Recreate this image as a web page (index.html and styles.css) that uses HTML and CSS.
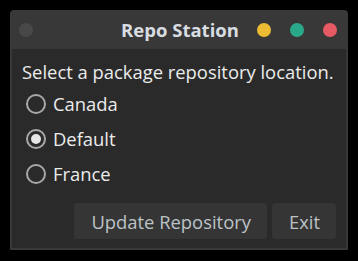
FILE: index.html
```html
<!DOCTYPE html>
<html lang="en">
<head>
  <meta charset="UTF-8" />
  <meta name="viewport" content="width=device-width, initial-scale=1.0"/>
  <title>Repo Station</title>
  <link rel="stylesheet" href="styles.css">
</head>
<body>
  <div class="window">
    <div class="titlebar">
      <span class="dot dot-grey"></span>
      <span class="title">Repo Station</span>
      <div class="controls">
        <span class="dot dot-yellow"></span>
        <span class="dot dot-green"></span>
        <span class="dot dot-red"></span>
      </div>
    </div>

    <div class="content">
      <p class="prompt">Select a package repository location.</p>

      <label class="option"><input type="radio" name="repo" value="canada" /><span class="radio"></span> Canada</label>
      <label class="option"><input type="radio" name="repo" value="default" checked /><span class="radio"></span> Default</label>
      <label class="option"><input type="radio" name="repo" value="france" /><span class="radio"></span> France</label>

      <div class="actions">
        <button class="btn">Update Repository</button>
        <button class="btn">Exit</button>
      </div>
    </div>
  </div>
</body>
</html>
```

FILE: styles.css
```css
body {
  margin: 0;
  padding: 10px;
  background: #000;
  font-family: "Open Sans", "Noto Sans", sans-serif;
}

.window {
  width: 338px;
  height: 240px;
  background: #383838;
  border-radius: 4px 4px 0 0;
  display: flex;
  flex-direction: column;
}

.titlebar {
  height: 39px;
  display: flex;
  align-items: center;
  padding: 0 11px 0 9px;
}

.title {
  flex: 1;
  text-align: center;
  color: #d8dde2;
  font-weight: bold;
  font-size: 18.5px;
  padding-left: 70px;
}

.controls {
  display: flex;
  gap: 19px;
}

.dot {
  width: 14px;
  height: 14px;
  border-radius: 50%;
}

.dot-grey { background: #484848; }
.dot-yellow { background: #ecbb34; }
.dot-green { background: #2aa88a; }
.dot-red { background: #e65a63; }

.content {
  flex: 1;
  margin: 0 2px 2px;
  background: #2a2a2a;
  padding: 10px 10px 9px;
  display: flex;
  flex-direction: column;
  color: #ececec;
  font-size: 18.4px;
}

.prompt {
  margin: 0 0 2px;
}

.option {
  display: flex;
  align-items: center;
  height: 35px;
  padding-left: 4px;
}

.option input {
  display: none;
}

.radio {
  width: 16px;
  height: 16px;
  border: 2px solid #a8a8a8;
  border-radius: 50%;
  margin-right: 7px;
  box-sizing: content-box;
  display: flex;
  align-items: center;
  justify-content: center;
}

.option input:checked + .radio::after {
  content: "";
  width: 10px;
  height: 10px;
  border-radius: 50%;
  background: #e6e6e6;
}

.actions {
  margin-top: auto;
  display: flex;
  justify-content: flex-end;
  gap: 5px;
}

.btn {
  height: 36px;
  padding: 0 16px 0 17px;
  background: #353535;
  color: #bcc2c6;
  border: none;
  border-radius: 3px;
  font-family: inherit;
  font-size: 18.4px;
}
```
